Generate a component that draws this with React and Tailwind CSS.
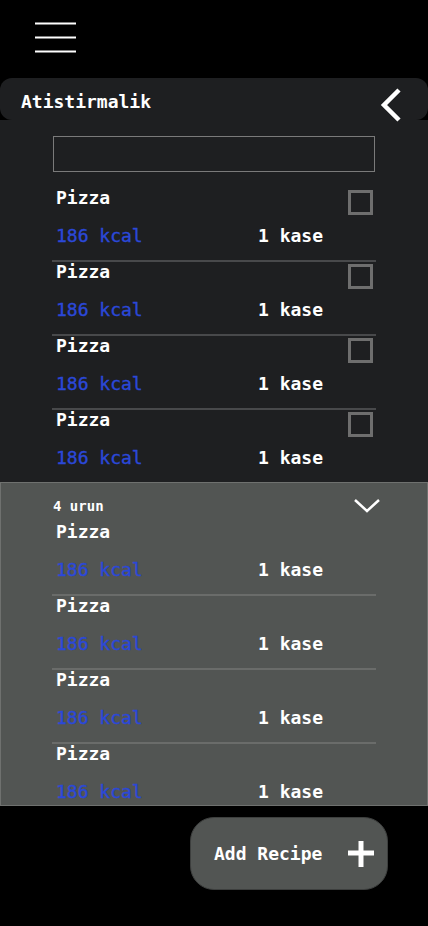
import React from "react";

const items = [1, 2, 3, 4];

const Row = ({ last, check, divider }) => (
  <div
    className={`flex justify-between items-start pl-[4px] pr-[3px] ${last ? "h-[72px]" : `h-[74px] border-b-2 ${divider}`}`}
  >
    <div>
      <div className="h-[20px] leading-[20px] text-[18px] font-bold text-white">
        Pizza
      </div>
      <div className="flex mt-[18px] h-[20px] leading-[20px] text-[18px]">
        <span className="w-[202px] text-[#2b48d8] [-webkit-text-stroke:0.4px_#2b48d8]">
          186 kcal
        </span>
        <span className="font-bold text-white">1 kase</span>
      </div>
    </div>
    {check && (
      <div className="mt-[2px] w-[25px] h-[25px] border-[3px] border-[#6e6e6e]" />
    )}
  </div>
);

export default function App() {
  return (
    <div className="min-h-[926px] bg-black font-['DejaVu_Sans_Mono',monospace]">
      <div className="h-[78px] pl-[35px] pt-[22px]">
        <svg width="41" height="31" viewBox="0 0 41 31">
          <g stroke="#fff" strokeWidth="2">
            <line x1="0" y1="1.5" x2="41" y2="1.5" />
            <line x1="0" y1="15.5" x2="41" y2="15.5" />
            <line x1="0" y1="29.5" x2="41" y2="29.5" />
          </g>
        </svg>
      </div>

      <div className="rounded-t-[12px] bg-black">
        <div className="flex justify-between items-start h-[42px] rounded-[12px] bg-[#1e1f21] pl-[21px] pr-[24px]">
          <span className="mt-[14px] leading-[20px] text-[18px] font-bold text-white">
            Atistirmalik
          </span>
          <svg
            width="24"
            height="36"
            viewBox="0 0 24 36"
            className="mt-[9px] overflow-visible"
          >
            <polyline
              points="19,3 4,18 19,33"
              fill="none"
              stroke="#fff"
              strokeWidth="4.5"
            />
          </svg>
        </div>
        <div className="bg-[#1e1f21] pt-[16px]">
          <div className="ml-[53px] w-[322px] h-[36px] border border-[#7a7a7a]" />
          <div className="ml-[52px] w-[324px] mt-[16px]">
            {items.map((i) => (
              <Row key={i} check last={i === 4} divider="border-[#48494b]" />
            ))}
          </div>
        </div>
      </div>

      <div className="h-[324px] overflow-hidden bg-[#525553] border border-[#6f716f]">
        <div className="flex justify-between items-start h-[39px] pl-[52px] pr-[46px]">
          <span className="mt-[15px] leading-[16px] text-[14px] font-bold text-white">
            4 urun
          </span>
          <svg width="28" height="16" viewBox="0 0 28 16" className="mt-[15px]">
            <polyline
              points="2,2 14,13 26,2"
              fill="none"
              stroke="#fff"
              strokeWidth="2.5"
            />
          </svg>
        </div>
        <div className="ml-[51px] w-[324px]">
          {items.map((i) => (
            <Row key={i} divider="border-[#6a6c6a]" />
          ))}
        </div>
      </div>

      <div className="pt-[11px] pl-[190px]">
        <button className="flex items-center w-[198px] h-[73px] rounded-[24px] bg-[#525553] border border-[#3d3f3e] pl-[23px] pr-[13px]">
          <span className="text-[18px] font-bold text-white">Add Recipe</span>
          <svg width="26" height="26" viewBox="0 0 26 26" className="ml-auto">
            <g stroke="#fff" strokeWidth="5">
              <line x1="13" y1="0" x2="13" y2="26" />
              <line x1="0" y1="12" x2="26" y2="12" />
            </g>
          </svg>
        </button>
      </div>
    </div>
  );
}
